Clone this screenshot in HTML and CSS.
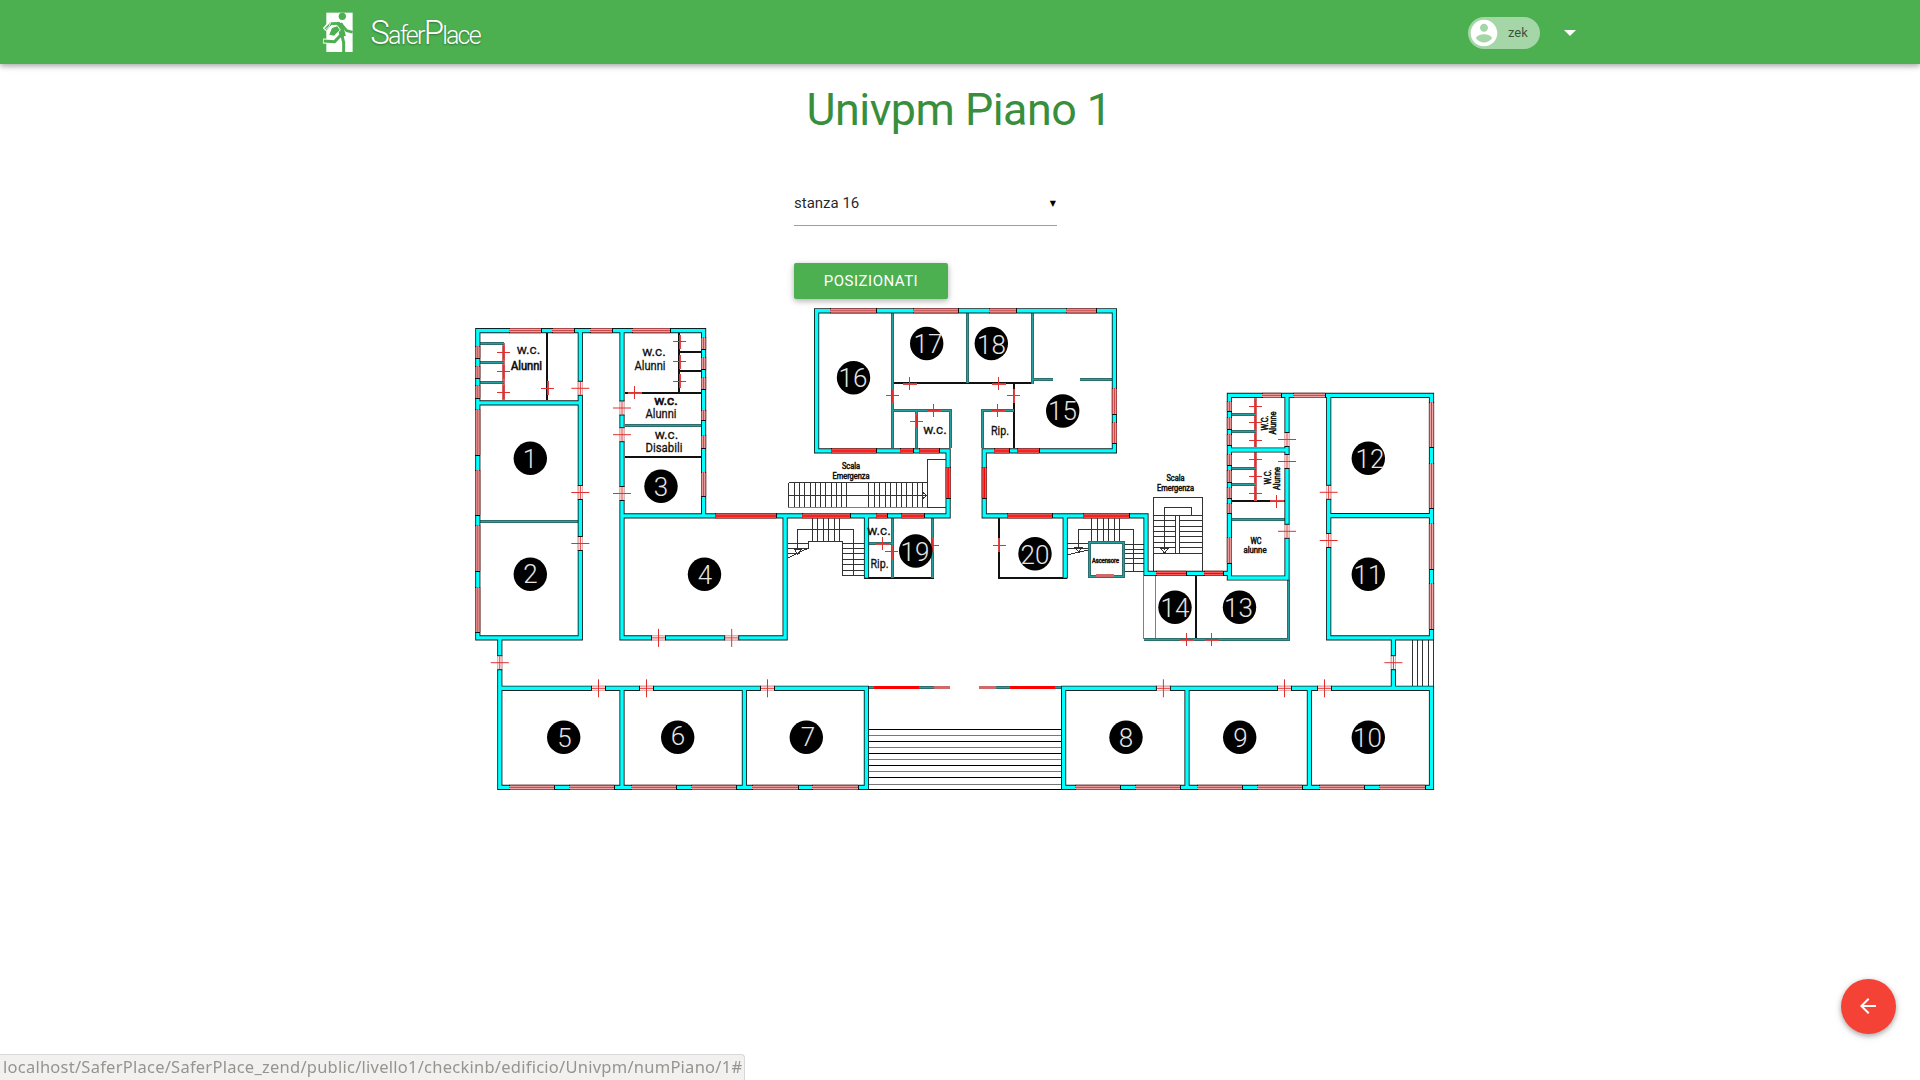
FILE: index.html
```html
<!DOCTYPE html>
<html lang="it">
<head>
<meta charset="utf-8">
<title>SaferPlace</title>
<link rel="stylesheet" href="styles.css">
</head>
<body>
<header class="navbar">
  <div class="navbar-inner">
    <a class="brand">
      <svg class="brand-mark" viewBox="66 38 94 124">
        <rect x="79" y="40" width="79" height="118" fill="#fff"/>
        <g fill="none" stroke-linejoin="round">
          <path class="halo" d="M116 75L92 71L74 92M122 110L104 127L69 125"/>
          <path class="limb" d="M118 72L129 112" stroke-width="18"/>
          <path class="limb" d="M124 74L140 94L158 99" stroke-width="8"/>
          <path class="limb" d="M126 108L131 130V162" stroke-width="9"/>
          <path class="limb" d="M122 108L104 127L71 125" stroke-width="9"/>
          <path class="limb" d="M120 72L93 73L76 91" stroke-width="8"/>
          <path d="M95 85L112 79L121 92L102 111L86 107Z" fill="#4caf50" stroke="#fff" stroke-width="3"/>
          <path d="M92 70L86 84L74 92" stroke="#fff" stroke-width="2.500"/>
        </g>
        <circle cx="127" cy="51" r="11" fill="#4caf50"/>
      </svg>
      <span class="brand-name"><b>S</b>afer<b>P</b>lace</span>
    </a>
    <div class="user">
      <span class="chip">
        <svg class="chip-icon" viewBox="0 0 24 24"><path fill="#fff" d="M12 2C6.48 2 2 6.48 2 12s4.48 10 10 10 10-4.480 10-10S17.520 2 12 2zm0 3c1.660 0 3 1.340 3 3s-1.340 3-3 3-3-1.340-3-3 1.340-3 3-3zm0 14.200c-2.500 0-4.710-1.280-6-3.220.030-1.990 4-3.080 6-3.080 1.990 0 5.970 1.090 6 3.080-1.290 1.940-3.500 3.220-6 3.220z"/></svg>
        zek
      </span>
      <span class="caret"></span>
    </div>
  </div>
</header>

<main class="content">
  <h1 class="title">Univpm Piano 1</h1>
  <form class="room-form">
    <div class="select"><span>stanza 16</span><span class="select-arrow">▼</span></div>
    <button class="btn" type="button">Posizionati</button>
  </form>

  <svg class="plan" viewBox="465 299 980 501" width="980" height="501">
    <defs>
      <marker id="cap-h" markerUnits="userSpaceOnUse" markerWidth="2" markerHeight="6" refX="0.5" refY="2.500"><rect width="1" height="5"/></marker>
      <marker id="cap-v" markerUnits="userSpaceOnUse" markerWidth="6" markerHeight="2" refX="2.500" refY="0.5"><rect width="5" height="1"/></marker>

      <path id="walls" d="M477.800 330.600H703.600V515.900M477.800 330.600V637.900H580.300V330.600M477.800 402.900H580.300M622 330.600V637.900H785.100V515.900M622 515.900H948.100V450.900H816.600V310.800H1114.400V450.900H984.200V515.900H1146V573.400H1229.400M866.500 515.900V576M1065.200 515.900V576M1229.400 578V395.400H1431.500V637.900H1328.700V395.400M1229.400 578H1287V395.400M1229.400 450H1287M1328.700 515.600H1431.500M499.800 640V787.400H866.400V688.300H499.800M622 688.300V787.400M744.400 688.300V787.400M1063.600 688.300V787.400H1431.500V688.300H1063.600M1187 688.300V787.400M1309.400 688.300V787.400M1393.400 640V688.300"/>

      <path id="thin-walls" d="M480 521H578M480 343H504M480 362.500H504M480 382H504M625 425H701M892 313V448M967 313V383M1032 313V384M1032 379H1053M1080 379H1112M893 410.500H950V448M916 410V448M1014 410.500H982V448M892 518V578M932.500 518V578M869 543.500H892M1231 414.500H1256M1231 431.500H1256M1231 468.500H1256M1231 484.500H1256M1231 519H1285M1144 639H1288.500V580M1089 542H1123V576H1089ZM868 687.500H874M919 687.500H934M996 687.500H1010M1055 687.500H1062"/>

      <path id="win-h" d="M509 330.600H541M552 330.600H574M590 330.600H612M632 330.600H670M830 310.800H876M913 310.800H958M989 310.800H1016M1066 310.800H1096M1262 395.400H1281M1293 395.400H1325M509 787.400H554M569 787.400H614M631 787.400H676M691 787.400H736M752 787.400H798M812 787.400H858M1075 787.400H1120M1135 787.400H1180M1197 787.400H1242M1257 787.400H1302M1319 787.400H1364M1379 787.400H1425"/>
      <path id="win-h-bright" d="M831 450.900H876M900 450.900H913M919 450.900H939M994 450.900H1009M1017 450.900H1039M715 515.900H776M802 515.900H850M876 515.900H887M901 515.900H924M1007 515.900H1052M1083 515.900H1129M1156 573.400H1186M1204 573.400H1223"/>
      <path id="win-v" d="M477.800 346V358M477.800 366V378M477.800 385V398M477.800 409V455M477.800 470V515M477.800 525V571M477.800 587V632M703.600 337V349M703.600 357V369M703.600 377V389M703.600 410V420M703.600 435V448M703.600 472V496M1114.400 388V414M1114.400 422V443M1229.400 401V411M1229.400 417V429M1229.400 434V445M1229.400 454V465M1229.400 470V482M1229.400 487V498M1229.400 503V513M1229.400 537V563M1431.500 402V447M1431.500 463V508M1431.500 523V569M1431.500 583V629"/>
      <path id="win-v-bright" d="M948.100 467V498M984.200 467V498"/>

      <g id="door-v">
        <path class="door-hole" d="M0-7V7"/>
        <path class="door-jamb" d="M-2-6.500V6.500M2-6.500V6.500"/>
        <path class="door-end" d="M-2.500-7H2.500M-2.500 7H2.500"/>
        <path class="door-cross" d="M-9 0H9M0-6.500V6.500"/>
      </g>
      <g id="door-h"><use href="#door-v" transform="rotate(90)"/></g>
      <g id="slit-v">
        <path class="slit" d="M0-7V7"/>
        <path class="door-cross" d="M-6.500 0H6.500M0-6.500V6.500"/>
      </g>
      <g id="slit-h"><use href="#slit-v" transform="rotate(90)"/></g>
    </defs>

    <!-- stairs -->
    <g class="line">
      <path d="M788.500 482.500H927M788.500 495.500H927M788.500 482.500V507M794.500 482V507M799.500 482V507M804.500 482V507M810.500 482V507M815.500 482V507M820.500 482V507M825.500 482V507M831.500 482V507M836.500 482V507M841.500 482V507M846.500 482V507M868.500 482V507M874.500 482V507M879.500 482V507M885.500 482V507M890.500 482V507M896.500 482V507M901.500 482V507M906.500 482V507M912.500 482V507M917.500 482V507M922.500 482V507M927.500 507V459.500H946M927 507.500H946M923 492.500L927 495.500L923 498.500"/>
      <path d="M812.500 518V541M817.500 518V541M823.500 518V541M828.500 518V541M834.500 518V541M839.500 518V541M797.500 550V529.500H853.500V575M788 558L808.500 548V541.500H842.500V575.500H864M788 543.500H808M788 548.500H808M788 553.500H800M843 543.500H864M843 548.500H864M843 553.500H864M843 559.500H864M843 564.500H864M843 570.500H864M794.500 549.500H801L797.500 554Z"/>
      <path d="M1091.500 518V541M1097.500 518V541M1103.500 518V541M1108.500 518V541M1114.500 518V541M1119.500 518V541M1078.500 548V529.500H1133.500V571M1067 543.500H1088M1067 548.500H1088M1067 555L1088 550M1123 544.500H1144M1123 549.500H1144M1123 553.500H1144M1123 558.500H1144M1123 563.500H1144M1123 571.500H1144M1075 547.500H1082L1078.500 551.500Z"/>
      <path d="M1153.500 571V497.500H1202.500V571M1164.500 550V507.500H1191.500V516M1153 515.500H1202M1153 553.500H1202M1175.500 515V553M1179.500 515V553M1153 520.500H1175M1153 526.500H1175M1153 531.500H1175M1153 536.500H1175M1153 542.500H1175M1153 547.500H1175M1180 520.500H1202M1180 526.500H1202M1180 531.500H1202M1180 536.500H1202M1180 542.500H1202M1180 547.500H1202M1161 548.500H1168L1164.500 553Z"/>
      <path d="M1412.500 640V686M1417.500 640V686M1422.500 640V686M1428.500 640V686M1433.500 640V686"/>
      <path class="dark" d="M869 729.500H1062M869 741.500H1062M869 753.500H1062M869 765.500H1062M869 777.500H1062M869 789.500H1062"/>
      <path class="soft" d="M869 735.500H1062M869 747.500H1062M869 759.500H1062M869 771.500H1062M869 784.500H1062"/>
    </g>

    <!-- light partitions -->
    <path class="partition" d="M547 333V400M679 333V392M679 352H701M679 371H701M625 393H701M625 457H701M893 383H1032M1014 383V448M864 578H934M999 518V578H1067M1231 501H1285M1196 576V639M867 576V578M1066 576V578"/>
    <path class="glass" d="M503.500 343V400M1255 398V447M1255 452V501M1096 576H1116M934 687.500H950M979 687.500H996"/>
    <path class="red-line" d="M1143.500 576V639M1155.500 576V639M788 507.500H927"/>
    <path class="red-bar" d="M874 687.500H919M1010 687.500H1055"/>

    <use href="#thin-walls" class="thin-edge"/>
    <use href="#thin-walls" class="thin-core"/>
    <path class="glass" d="M1096 575.500H1114"/>
    <use href="#walls" class="wall-edge"/>
    <use href="#walls" class="wall-core"/>

    <g class="smooth">
      <g class="caps-h"><use href="#win-h" class="win-edge"/><use href="#win-h-bright" class="win-edge bright"/></g>
      <g class="caps-v"><use href="#win-v" class="win-edge"/><use href="#win-v-bright" class="win-edge bright"/></g>
      <use href="#win-h" class="win-pane"/><use href="#win-v" class="win-pane"/>
      <use href="#win-h-bright" class="win-pane bright"/><use href="#win-v-bright" class="win-pane bright"/>
      <use href="#win-h" class="win-mid"/><use href="#win-v" class="win-mid"/>
      <use href="#win-h-bright" class="win-mid bright"/><use href="#win-v-bright" class="win-mid bright"/>
    </g>

    <!-- doors in load-bearing walls -->
    <g class="smooth">
      <use href="#door-v" x="580.300" y="388.300"/><use href="#door-v" x="580.300" y="492.500"/><use href="#door-v" x="580.300" y="543.500"/>
      <use href="#door-v" x="622" y="408"/><use href="#door-v" x="622" y="434.700"/><use href="#door-v" x="622" y="493.500"/>
      <use href="#door-v" x="499.800" y="662.700"/><use href="#door-v" x="1393.400" y="662.700"/>
      <use href="#door-v" x="1287" y="439.500"/><use href="#door-v" x="1287" y="461.500"/><use href="#door-v" x="1287" y="531.300"/>
      <use href="#door-v" x="1328.700" y="492.300"/><use href="#door-v" x="1328.700" y="540.500"/>
      <use href="#door-h" x="658.500" y="637.900"/><use href="#door-h" x="731.700" y="637.900"/>
      <use href="#door-h" x="598.500" y="688.300"/><use href="#door-h" x="646.500" y="688.300"/><use href="#door-h" x="767.500" y="688.300"/>
      <use href="#door-h" x="1163.400" y="688.300"/><use href="#door-h" x="1284.500" y="688.300"/><use href="#door-h" x="1324.500" y="688.300"/>
    </g>
    <!-- doors in partitions -->
    <g>
      <use href="#slit-v" x="503.500" y="352.500"/><use href="#slit-v" x="503.500" y="371.500"/><use href="#slit-v" x="503.500" y="392"/>
      <use href="#slit-v" x="547.500" y="388"/>
      <use href="#slit-v" x="679.500" y="341.500"/><use href="#slit-v" x="679.500" y="361.500"/><use href="#slit-v" x="679.500" y="381"/>
      <use href="#slit-h" x="634.500" y="392.500"/>
      <use href="#slit-h" x="909.500" y="383.500"/><use href="#slit-h" x="998.500" y="383.500"/>
      <use href="#slit-v" x="892.500" y="395.500"/><use href="#slit-v" x="1013.500" y="395.500"/>
      <use href="#slit-h" x="933.500" y="410.500"/><use href="#slit-h" x="997.500" y="410.500"/><use href="#slit-v" x="916" y="421"/>
      <use href="#slit-h" x="882.500" y="543.500"/><use href="#slit-v" x="891.500" y="551.500"/><use href="#slit-v" x="932.500" y="545"/>
      <use href="#slit-v" x="999" y="545"/>
      <use href="#slit-v" x="1255" y="406"/><use href="#slit-v" x="1255" y="422.500"/><use href="#slit-v" x="1255" y="440"/>
      <use href="#slit-v" x="1255" y="459.500"/><use href="#slit-v" x="1255" y="476.500"/><use href="#slit-v" x="1255" y="493.500"/>
      <use href="#slit-h" x="1276.500" y="501"/>
      <use href="#slit-h" x="1186.500" y="639.500"/><use href="#slit-h" x="1211.500" y="639.500"/>
    </g>

    <!-- room labels -->
    <g class="label">
      <text x="528.500" y="354">w.c.</text><text class="heavy" x="526.500" y="369.500" textLength="31" lengthAdjust="spacingAndGlyphs">Alunni</text>
      <text x="654" y="356">w.c.</text><text x="650" y="369.500" textLength="31" lengthAdjust="spacingAndGlyphs">Alunni</text>
      <text class="heavy" x="666" y="404.500">w.c.</text><text x="661" y="417.500" textLength="31" lengthAdjust="spacingAndGlyphs">Alunni</text>
      <text x="666.500" y="438.500">w.c.</text><text x="664" y="452" textLength="37" lengthAdjust="spacingAndGlyphs">Disabili</text>
      <text x="935" y="434">w.c.</text><text x="1000" y="434.500" textLength="18" lengthAdjust="spacingAndGlyphs">Rip.</text>
      <text x="879" y="535">w.c.</text><text x="879.500" y="568" textLength="18" lengthAdjust="spacingAndGlyphs">Rip.</text>
    </g>
    <g class="label small">
      <text x="851" y="469" textLength="18" lengthAdjust="spacingAndGlyphs">Scala</text><text x="851" y="479" textLength="37" lengthAdjust="spacingAndGlyphs">Emergenza</text>
      <text x="1175.500" y="481" textLength="18" lengthAdjust="spacingAndGlyphs">Scala</text><text x="1175.500" y="491" textLength="37" lengthAdjust="spacingAndGlyphs">Emergenza</text>
      <text x="1256" y="543.500" textLength="11" lengthAdjust="spacingAndGlyphs">WC</text><text x="1255" y="553" textLength="23" lengthAdjust="spacingAndGlyphs">alunne</text>
      <text transform="translate(1268 423) rotate(-90)" textLength="15" lengthAdjust="spacingAndGlyphs">W.C.</text><text transform="translate(1276 423) rotate(-90)" textLength="23" lengthAdjust="spacingAndGlyphs">Alunne</text>
      <text transform="translate(1271 477) rotate(-90)" textLength="15" lengthAdjust="spacingAndGlyphs">W.C.</text><text transform="translate(1280 478.500) rotate(-90)" textLength="23" lengthAdjust="spacingAndGlyphs">Alunne</text>
      <text class="tiny" x="1105.500" y="563" textLength="27" lengthAdjust="spacingAndGlyphs">Ascensore</text>
    </g>

    <!-- room numbers -->
    <g class="dots">
      <circle cx="530.300" cy="458.300" r="16.700"/><circle cx="530.300" cy="574.300" r="16.700"/><circle cx="661" cy="486.300" r="16.700"/><circle cx="704.500" cy="574.300" r="16.700"/>
      <circle cx="563.700" cy="737.300" r="16.700"/><circle cx="677.700" cy="737.300" r="16.700"/><circle cx="806.300" cy="737.300" r="16.700"/><circle cx="1126" cy="737.300" r="16.700"/>
      <circle cx="1239.700" cy="737.300" r="16.700"/><circle cx="1368.300" cy="737.300" r="16.700"/><circle cx="1368.300" cy="574.300" r="16.700"/><circle cx="1368.300" cy="458.300" r="16.700"/>
      <circle cx="1239.500" cy="607.300" r="16.700"/><circle cx="1175" cy="607.300" r="16.700"/><circle cx="1062.700" cy="411" r="16.700"/><circle cx="853.500" cy="377.700" r="16.700"/>
      <circle cx="926.700" cy="343.500" r="16.700"/><circle cx="991.300" cy="343.500" r="16.700"/><circle cx="915.700" cy="551" r="16.700"/><circle cx="1035" cy="553.700" r="16.700"/>
    </g>
    <g class="numbers">
      <text x="530" y="468">1</text><text x="530.500" y="583">2</text><text x="661" y="496">3</text><text x="705" y="584">4</text>
      <text x="564.500" y="747">5</text><text x="678" y="745">6</text><text x="808" y="746">7</text><text x="1126" y="746.500">8</text>
      <text x="1240.500" y="747">9</text><text x="1367.500" y="747">10</text><text x="1368" y="584">11</text><text x="1370" y="468">12</text>
      <text x="1238.500" y="616.500">13</text><text x="1175" y="616.500">14</text><text x="1062.500" y="420">15</text><text x="853" y="387">16</text>
      <text x="928" y="353">17</text><text x="991.500" y="354">18</text><text x="915" y="560.500">19</text><text x="1035" y="563.500">20</text>
    </g>
  </svg>
</main>

<a class="fab"><svg viewBox="0 0 24 24" width="24" height="24"><path fill="#fff" d="M20 11H7.830l5.590-5.590L12 4l-8 8 8 8 1.410-1.410L7.830 13H20v-2z"/></svg></a>
<div class="status">localhost/SaferPlace/SaferPlace_zend/public/livello1/checkinb/edificio/Univpm/numPiano/1#</div>
</body>
</html>
```
FILE: styles.css
```css
* { box-sizing: border-box; }

body {
  margin: 0;
  height: 1080px;
  overflow: hidden;
  background: #fff;
  color: rgba(0, 0, 0, .87);
  font: 15px/1.5 Roboto, sans-serif;
}

/* top bar */
.navbar {
  height: 64px;
  background: #4caf50;
  box-shadow: 0 2px 5px rgba(0, 0, 0, .26), 0 2px 8px rgba(0, 0, 0, .12);
}
.navbar-inner {
  display: flex;
  justify-content: space-between;
  align-items: center;
  width: 1344px;
  height: 64px;
  margin: 0 auto;
  padding: 2px 56px 0 34px;
}
.brand { display: flex; align-items: center; gap: 17px; }
.brand-mark { width: 31.300px; height: 41.300px; }
.halo { stroke: #fff; stroke-width: 15; }
.limb { stroke: #4caf50; }
.brand-name {
  padding-top: 2px;
  color: #fff;
  font-size: 25px;
  font-weight: 300;
  line-height: 40px;
  letter-spacing: -1.800px;
  text-shadow: 0 1px 2px rgba(0, 0, 0, .35);
}
.brand-name b { font-size: 33px; font-weight: 300; }
.user { display: flex; align-items: center; gap: 24px; }
.chip {
  display: flex;
  align-items: center;
  gap: 8px;
  width: 72px;
  height: 32px;
  border-radius: 16px;
  background: #a5d6a7;
  color: rgba(0, 0, 0, .65);
  font-size: 13px;
  font-weight: 400;
}
.chip-icon { width: 32px; height: 32px; }
.caret {
  border: 6px solid transparent;
  border-top-color: #fff;
  border-bottom: 0;
}

/* page */
.content { padding: 20px 0 0; }
.title {
  margin: 0 0 0 -2px;
  color: #388e3c;
  font-size: 44.800px;
  font-weight: 400;
  line-height: 52px;
  letter-spacing: -.5px;
  text-align: center;
}
.room-form { width: 263px; margin: 45px 0 0 794px; }
.select {
  display: flex;
  justify-content: space-between;
  align-items: center;
  height: 45px;
  border-bottom: 1px solid #9e9e9e;
}
.select-arrow {
  padding: 1px 1px 0 0;
  color: #000;
  font: 8px/1 "DejaVu Sans", sans-serif;
}
.btn {
  display: block;
  width: 154px;
  height: 36px;
  margin-top: 37px;
  padding: 0;
  border: 0;
  border-radius: 2px;
  background: #4caf50;
  box-shadow: 0 2px 5px rgba(0, 0, 0, .2), 0 2px 8px rgba(0, 0, 0, .14);
  color: #fff;
  font: 15px/36px Roboto, sans-serif;
  letter-spacing: .5px;
  text-transform: uppercase;
}

/* floor plan */
.plan { display: block; margin-left: 465px; fill: none; shape-rendering: crispEdges; }
.plan text { fill: #111; text-anchor: middle; }
.smooth { shape-rendering: auto; }
.line { stroke: #333; stroke-width: 1; }
.dark { stroke: #000; }
.soft { stroke: #777; }
.partition { stroke: #111; stroke-width: 2; }
.glass { stroke: #d06a6a; stroke-width: 3; }
.red-line { stroke: #e05555; }
.red-bar { stroke: #f00; stroke-width: 3; }
.thin-edge { stroke: #2b6f6f; stroke-width: 3; }
.thin-core { stroke: #2a9d9d; stroke-width: 1; }
.wall-edge { stroke: #102020; stroke-width: 5.200; stroke-linecap: square; shape-rendering: auto; }
.wall-core { stroke: #0ff; stroke-width: 3.400; stroke-linecap: square; shape-rendering: auto; }
#cap-h rect, #cap-v rect { fill: #111; }
.caps-h { marker: url(#cap-h); }
.caps-v { marker: url(#cap-v); }
.win-edge { stroke: #a84848; stroke-width: 5.200; }
.win-pane { stroke: #efa5a5; stroke-width: 3; }
.win-mid { stroke: #c84040; stroke-width: 1; }
.win-edge.bright { stroke: #a33; }
.win-pane.bright { stroke: #f77; }
.win-mid.bright { stroke: #f00; stroke-width: 1.500; }
.door-hole { stroke: #fff; stroke-width: 5.400; }
.door-jamb { stroke: #e09a9a; stroke-width: 1; }
.door-end { stroke: #111; stroke-width: 1; }
.door-cross { stroke: #e03030; stroke-width: 1; }
.slit { stroke: #e24545; stroke-width: 2; }
.label { font: 13.500px Roboto, sans-serif; }
.label text { stroke: #111; stroke-width: .3; }
.label .heavy { stroke-width: .7; }
.label.small { font-size: 8.500px; }
.label.small text { stroke-width: .5; }
.label.small .tiny { font-size: 6.500px; }
.dots { fill: #000; shape-rendering: auto; }
.plan .numbers text { fill: #e4e4e4; font: 300 26px Roboto, sans-serif; }

/* floating back button */
.fab {
  position: fixed;
  right: 24px;
  bottom: 46px;
  display: flex;
  align-items: center;
  justify-content: center;
  width: 55.500px;
  height: 55.500px;
  border-radius: 50%;
  background: #f44336;
  box-shadow: 0 2px 5px rgba(0, 0, 0, .26), 0 2px 8px rgba(0, 0, 0, .14);
}

/* link preview */
.status {
  position: fixed;
  left: 0;
  bottom: 0;
  width: 745px;
  height: 26px;
  padding-left: 3px;
  border: 1px solid #d8d8d8;
  border-width: 1px 1px 0 0;
  border-radius: 0 4px 0 0;
  background: #f2f1f0;
  color: #96948f;
  font: 16.500px/23px "Noto Sans", sans-serif;
  letter-spacing: .25px;
  white-space: nowrap;
}
```
